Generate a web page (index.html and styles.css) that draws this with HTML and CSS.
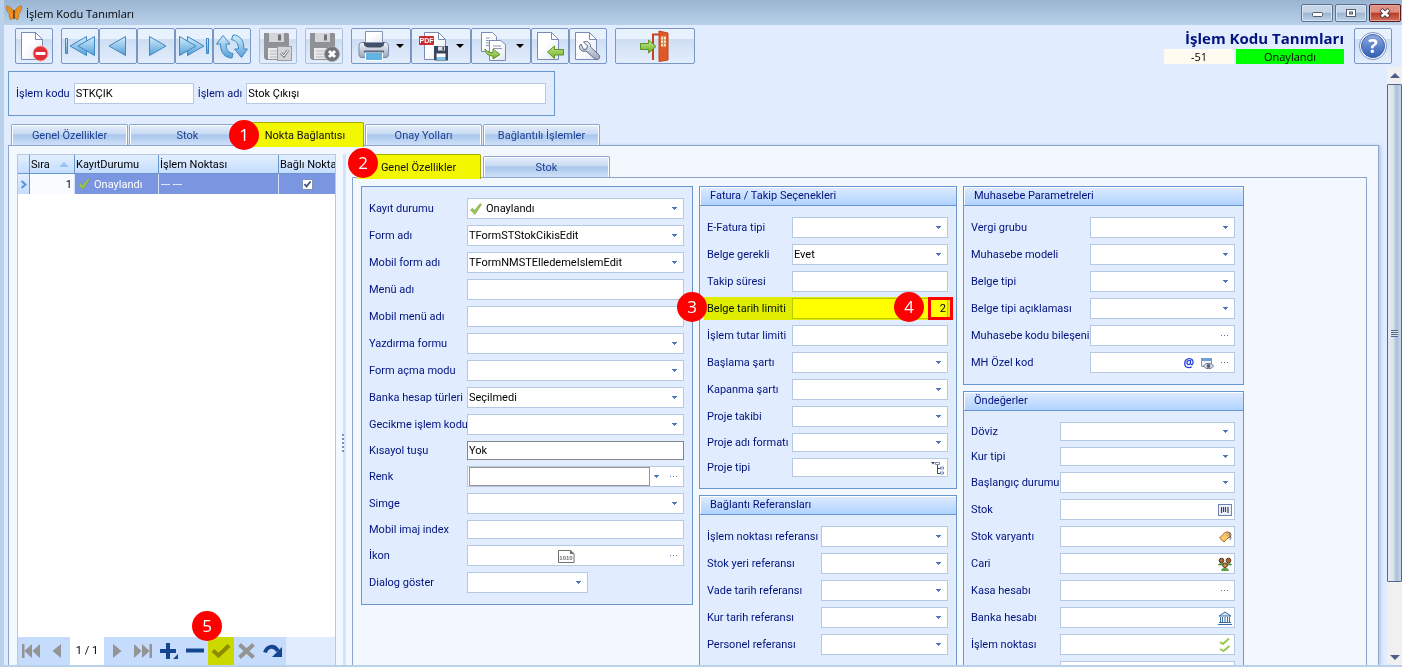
FILE: index.html
```html
<!DOCTYPE html>
<html lang="tr">
<head>
    <meta charset="utf-8" />
    <meta name="viewport" content="width=device-width, initial-scale=1" />
    <title>İşlem Kodu Tanımları</title>
    <link rel="stylesheet" href="styles.css">
</head>
<body>
    <!-- shared icon shapes -->
    <svg class="defs" width="0" height="0" aria-hidden="true">
        <defs>
            <linearGradient id="blue" x1="0" y1="0" x2="0" y2="1">
                <stop offset="0" stop-color="#d3eefb" />
                <stop offset="1" stop-color="#559fd8" />
            </linearGradient>
            <linearGradient id="paper" x1="0" y1="0" x2="1" y2="1">
                <stop offset="0.400" stop-color="#ffffff" />
                <stop offset="1" stop-color="#e3e7f3" />
            </linearGradient>
            <linearGradient id="green" x1="0" y1="0" x2="0" y2="1">
                <stop offset="0" stop-color="#c5e68a" />
                <stop offset="1" stop-color="#6eb02c" />
            </linearGradient>
            <linearGradient id="steel" x1="0" y1="0" x2="0" y2="1">
                <stop offset="0" stop-color="#f4f6fa" />
                <stop offset="1" stop-color="#98a4b8" />
            </linearGradient>
            <linearGradient id="help" x1="0" y1="0" x2="0" y2="1">
                <stop offset="0" stop-color="#8fa9e0" />
                <stop offset="1" stop-color="#2f5fb5" />
            </linearGradient>
            <symbol id="page" viewBox="0 0 32 32">
                <path d="M6.500 2.500h14l7 7v20h-21z" fill="url(#paper)" stroke="#7a89b8" />
                <path d="M20.500 2.500v7h7z" fill="#fff" stroke="#7a89b8" />
            </symbol>
            <symbol id="floppy" viewBox="0 0 32 32">
                <path d="M2 3h24l1 1v26H4l-2-2z" fill="#8f9196" />
                <path d="M7 3h15v9H7z" fill="#d4d5d8" />
                <path d="M16 4.500h3v6h-3z" fill="#6f7178" />
                <path d="M6 18h17v11H6z" fill="#e9eaec" />
                <path d="M8 21h13M8 24h13M8 27h13" stroke="#b5b7bb" />
            </symbol>
            <symbol id="tick" viewBox="0 0 12 12">
                <path d="M0.500 7 2.500 5.200 4.500 7.600 10.200.600 11.500 1.600 5 11.400z" fill="#97c94c" stroke="#7f9c55" stroke-width=".6" />
            </symbol>
        </defs>
    </svg>

    <header class="titlebar">
        <svg class="logo" width="16" height="16" viewBox="0 0 16 16">
            <path d="M8 7C6 3 3 .500.500 1 0 4 1.500 7.500 3.500 9c-1 1.500 0 4.500 1.500 6C7 13.500 8 11 8 9c0 2 1 4.500 3 6 1.500-1.500 2.500-4.500 1.500-6 2-1.500 3.500-5 3-8C13 .500 10 3 8 7z" fill="#ef9420" stroke="#a85f10" stroke-width=".6" />
            <path d="M8 5v9" stroke="#4a2408" stroke-width="1.200" />
            <path d="M3 3.500 7 8M13 3.500 9 8" stroke="#c26c10" stroke-width=".6" />
        </svg>
        <span class="caption">İşlem Kodu Tanımları</span>
        <div class="window-buttons">
            <button class="win" aria-label="Simge durumuna küçült"><svg width="12" height="12"><rect x="1.500" y="5.500" width="10" height="4" rx="1" fill="#fff" stroke="#555d6b" /></svg></button>
            <button class="win" aria-label="Ekranı kapla"><svg width="12" height="12"><rect x="1.500" y="2.500" width="9" height="7" fill="#fff" stroke="#555d6b" /><rect x="4.500" y="5" width="3" height="2" fill="#9db7d3" stroke="#555d6b" /></svg></button>
            <button class="win close" aria-label="Kapat"><svg width="12" height="12"><path d="M2 2.500 10 10M10 2.500 2 10" stroke="#4b3036" stroke-width="4.400" /><path d="M2.500 3 9.500 9.500M9.500 3 2.500 9.500" stroke="#fff" stroke-width="2.600" /></svg></button>
        </div>
    </header>

    <div class="toolbar">
        <div class="tool-group">
            <button class="tool" aria-label="Sil"><svg width="32" height="32"><use href="#page" x="-3" /><circle cx="22.500" cy="23.500" r="7.500" fill="#e02f36" stroke="#f7a5a5" /><rect x="17.500" y="22" width="10" height="3" rx="1" fill="#fff" /></svg></button>
        </div>
        <div class="tool-group">
            <button class="tool" aria-label="İlk"><svg width="32" height="32" fill="url(#blue)" stroke="#3f87c2"><path d="M1.500 8.500h2v15h-2z" /><path d="M22.500 6.500v19L6 16z" /><path d="M30.500 6.500v19L14 16z" /></svg></button>
            <button class="tool" aria-label="Önceki"><svg width="32" height="32" fill="url(#blue)" stroke="#3f87c2"><path d="M23.500 6.500v19L7 16z" /></svg></button>
            <button class="tool" aria-label="Sonraki"><svg width="32" height="32" fill="url(#blue)" stroke="#3f87c2"><path d="M9.500 6.500v19L26 16z" /></svg></button>
            <button class="tool" aria-label="Son"><svg width="32" height="32" fill="url(#blue)" stroke="#3f87c2"><path d="M28.500 8.500h2v15h-2z" /><path d="M9.500 6.500v19L26 16z" /><path d="M1.500 6.500v19L18 16z" /></svg></button>
            <button class="tool" aria-label="Yenile"><svg width="32" height="32" fill="url(#blue)" stroke="#3f87c2"><path d="M7 5.500 14 14h-4c0 6 3 9 7 9.500l-1 4.500C9 28 4.500 23 4.500 14H.500z" /><path d="M25.500 27.500 18.500 19h4c0-6-3-8.500-7-9.500L17 5c7 0 11 5.500 11 14h3.500z" /></svg></button>
        </div>
        <div class="tool-group">
            <button class="tool pale" aria-label="Kaydet"><svg width="32" height="32"><use href="#floppy" /><rect x="15.500" y="16.500" width="14" height="14" fill="#d2d4d9" stroke="#9b9da2" /><path d="m19 23 3 3 4-6" fill="none" stroke="#85878c" stroke-width="3" /><path d="m19 23 3 3 4-6" fill="none" stroke="#fff" /></svg></button>
        </div>
        <div class="tool-group">
            <button class="tool pale" aria-label="Vazgeç"><svg width="32" height="32"><use href="#floppy" /><circle cx="24" cy="24" r="7.500" fill="#6f7278" stroke="#a3a5aa" /><path d="m21 21 6 6M27 21l-6 6" stroke="#fff" stroke-width="3" /></svg></button>
        </div>
        <div class="tool-group">
            <button class="tool drop" aria-label="Yazdır"><svg width="32" height="32"><path d="M3.500 12.500c-2 0-2.500 2-2.500 4v7c0 3 1 4 3 4h24c2 0 2.500-2 2.500-4v-7c0-2-1-4-3-4z" fill="url(#steel)" stroke="#7587a8" /><path d="M5.500 12h21l-1 4-3 1.500h-13L6.500 16z" fill="#43506b" /><path d="M7.500 1.500h17v11h-17z" fill="url(#paper)" stroke="#8794b4" /><path d="M7.500 22.500h17v8h-17z" fill="#62b2e4" stroke="#fff" /><path d="M6 21.500h20" stroke="#5b6985" stroke-width="2" /></svg><span class="caret"></span></button>
            <button class="tool drop" aria-label="PDF kaydet"><svg width="32" height="32"><use href="#page" /><rect x="1" y="6" width="15" height="9" rx="1" fill="#c92b2e" /><text x="8.500" y="13" class="pdf">PDF</text><path d="M16 16h14v14.500H17l-1-1z" fill="#39445d" /><path d="M20 16.500h7v4h-7z" fill="#dfe5ee" /><path d="M24.500 17h1.500v3h-1.500z" fill="#39445d" /><path d="M18.500 23.500h9v3.500h-9z" fill="#fff" /><path d="M18.500 27h9v3h-9z" fill="#7cc5ec" /></svg><span class="caret"></span></button>
            <button class="tool drop" aria-label="Kopyala"><svg width="32" height="32"><path d="M3.500 2.500h11l4 4v15h-15z" fill="url(#paper)" stroke="#7a89b8" /><path d="M8 8h4M8 10.500h5M8 13h5M8 15.500h5" stroke="#8a97b8" /><path d="M11.500 10.500h11l5 4v16h-16z" fill="url(#paper)" stroke="#7a89b8" /><path d="M15 16h8M15 18.500h9" stroke="#8a97b8" /><path d="M7 19c2 3 5 4 8 3.500V19l7 5.500-7 4.500v-3c-5 0-8-3-8-7z" fill="url(#green)" stroke="#5c9422" /></svg><span class="caret"></span></button>
            <button class="tool" aria-label="İçeri al"><svg width="32" height="32"><use href="#page" x="-3" /><path d="m13.500 22 7-6v3.500h9v5.500h-9v3.500z" fill="url(#green)" stroke="#5c9422" /></svg></button>
            <button class="tool" aria-label="Ayarlar"><svg width="32" height="32"><use href="#page" x="-3" /><path d="M9 14c-1.500 1-2 3-1 5s3.500 3 6 2l9 8c3 2 6-1 4-4l-8.500-8c.500-4-3-6.500-7-5l4 4-1 3-3 .500z" fill="url(#steel)" stroke="#5c6b86" /></svg></button>
        </div>
        <div class="tool-group">
            <button class="tool wide" aria-label="Çıkış"><svg width="32" height="32"><path d="M14 30V4.500H21" fill="none" stroke="#c9441e" stroke-width="2" /><path d="m20 1 9 2v27l-9 1.500z" fill="#df5828" stroke="#c9441e" /><path d="M22 6.500h5v10h-5z" fill="#f2e4c3" /><path d="M24.500 6.500v10M22 10h5M22 13.500h5" stroke="#b8905c" /><path d="M1.500 13.500h8V10l7.500 6.500L9.500 23v-3.500h-8z" fill="url(#green)" stroke="#5c9422" /></svg></button>
        </div>
        <div class="record">
            <h1>İşlem Kodu Tanımları</h1>
            <div class="record-state">
                <span class="record-id">-51</span>
                <span class="record-status">Onaylandı</span>
            </div>
        </div>
        <button class="tool help" aria-label="Yardım"><svg width="32" height="32"><circle cx="16" cy="16" r="13.500" fill="#fff" stroke="#7c93c3" /><circle cx="16" cy="16" r="11.500" fill="url(#help)" stroke="#3a62ad" /><text x="16" y="23" class="question">?</text></svg></button>
    </div>

    <div class="main">
        <div class="content">
            <div class="code-panel">
                <label for="kod">İşlem kodu</label>
                <input class="field code" id="kod" type="text" value="STKÇIK">
                <label for="ad">İşlem adı</label>
                <input class="field name" id="ad" type="text" value="Stok Çıkışı">
            </div>

            <div class="tabs">
                <button class="tab">Genel Özellikler</button>
                <button class="tab">Stok</button>
                <button class="tab active">Nokta Bağlantısı<span class="badge badge-tab">1</span></button>
                <button class="tab">Onay Yolları</button>
                <button class="tab">Bağlantılı İşlemler</button>
            </div>

            <div class="tab-page">
                <div class="list">
                    <table class="grid">
                        <colgroup><col class="c-mark"><col class="c-no"><col class="c-state"><col class="c-point"><col></colgroup>
                        <thead>
                            <tr><th></th><th>Sıra<span class="sort"></span></th><th>KayıtDurumu</th><th>İşlem Noktası</th><th>Bağlı Nokta</th></tr>
                        </thead>
                        <tbody>
                            <tr>
                                <td class="mark"><svg width="7" height="9"><path d="m1.500 1 4 3.500-4 3.500" fill="none" stroke="#5b93dd" stroke-width="2" /></svg></td>
                                <td class="no">1</td>
                                <td><span class="with-icon"><svg width="12" height="12"><use href="#tick" /></svg>Onaylandı</span></td>
                                <td>--- ---</td>
                                <td class="check"><input type="checkbox" checked aria-label="Bağlı Nokta"></td>
                            </tr>
                        </tbody>
                    </table>
                    <div class="navigator">
                        <button aria-label="İlk kayıt"><svg width="20" height="16" fill="#949494"><path d="M1 1h2.500v14H1zM11 1v14L3.500 8zM19 1v14l-7.500-7z" /></svg></button>
                        <button aria-label="Önceki kayıt"><svg width="20" height="16" fill="#949494"><path d="M14 1v14L5.500 8z" /></svg></button>
                        <span class="position">1 / 1</span>
                        <button aria-label="Sonraki kayıt"><svg width="20" height="16" fill="#949494"><path d="M6 1v14l8.500-7z" /></svg></button>
                        <button aria-label="Son kayıt"><svg width="20" height="16" fill="#949494"><path d="M16.500 1H19v14h-2.500zM1 1v14l7.500-7zM9 1v14l7.500-7z" /></svg></button>
                        <button aria-label="Ekle"><svg width="20" height="18" fill="#14468f"><path d="M7 1h4v6h6v4h-6v6H7v-6H1V7h6zM19 12v5h-5z" /></svg></button>
                        <button aria-label="Çıkar"><svg width="20" height="16" fill="#14468f"><path d="M1 5.500h18v4H1z" /></svg></button>
                        <button class="post" aria-label="Onayla"><svg width="20" height="16"><path d="m2 7.500 5.500 5L18 2.500" fill="none" stroke="#8e8b00" stroke-width="4" /></svg><span class="badge badge-post">5</span></button>
                        <button aria-label="İptal"><svg width="20" height="16"><path d="m2.500 1.500 14 13M16.500 1.500l-14 13" stroke="#949494" stroke-width="4" /></svg></button>
                        <button aria-label="Geri al"><svg width="20" height="16"><path d="M2 9.500C4 3 11 1.500 15 8" fill="none" stroke="#14468f" stroke-width="4" /><path d="M19 4v10H9z" fill="#14468f" /></svg></button>
                    </div>
                </div>

                <div class="splitter"><span class="grip"></span></div>

                <div class="detail">
                    <div class="tabs inner">
                        <button class="tab active">Genel Özellikler<span class="badge badge-inner">2</span></button>
                        <button class="tab">Stok</button>
                    </div>
                    <div class="detail-page">
                        <div class="column">
                            <section class="group general">
                                <div class="rows">
                                    <div class="row"><label for="g1">Kayıt durumu</label><div class="picture-select"><svg width="12" height="12"><use href="#tick" /></svg><select class="field" id="g1"><option>Onaylandı</option></select></div></div>
                                    <div class="row"><label for="g2">Form adı</label><select class="field" id="g2"><option>TFormSTStokCikisEdit</option></select></div>
                                    <div class="row"><label for="g3">Mobil form adı</label><select class="field" id="g3"><option>TFormNMSTElledemeIslemEdit</option></select></div>
                                    <div class="row"><label for="g4">Menü adı</label><input class="field" id="g4" type="text"></div>
                                    <div class="row"><label for="g5">Mobil menü adı</label><input class="field" id="g5" type="text"></div>
                                    <div class="row"><label for="g6">Yazdırma formu</label><select class="field" id="g6"><option></option></select></div>
                                    <div class="row"><label for="g7">Form açma modu</label><select class="field" id="g7"><option></option></select></div>
                                    <div class="row"><label for="g8">Banka hesap türleri</label><select class="field" id="g8"><option>Seçilmedi</option></select></div>
                                    <div class="row"><label for="g9">Gecikme işlem kodu</label><select class="field" id="g9"><option></option></select></div>
                                    <div class="row short"><label for="g10">Kısayol tuşu</label><input class="field dark" id="g10" type="text" value="Yok"></div>
                                    <div class="row"><label for="g11">Renk</label><div class="field combo color"><select id="g11"><option></option></select><button class="more" aria-label="Renk seç"></button></div></div>
                                    <div class="row"><label for="g12">Simge</label><select class="field" id="g12"><option></option></select></div>
                                    <div class="row short"><label for="g13">Mobil imaj index</label><input class="field" id="g13" type="text"></div>
                                    <div class="row"><label for="g14">İkon</label><div class="field combo icon-field"><svg width="17" height="14"><path d="M.500 1.500h12l3.500 3v9H.500z" fill="#fff" stroke="#6f6f6f" /><path d="M12 1v4h4z" fill="#6f6f6f" /><text x="8" y="11" class="bits">1010</text></svg><button class="more" id="g14"></button></div></div>
                                    <div class="row"><label for="g15">Dialog göster</label><select class="field narrow" id="g15"><option></option></select></div>
                                </div>
                            </section>
                        </div>

                        <div class="column">
                            <section class="group invoice">
                                <h2>Fatura / Takip Seçenekleri</h2>
                                <div class="rows">
                                    <div class="row"><label for="f1">E-Fatura tipi</label><select class="field" id="f1"><option></option></select></div>
                                    <div class="row"><label for="f2">Belge gerekli</label><select class="field" id="f2"><option>Evet</option></select></div>
                                    <div class="row"><label for="f3">Takip süresi</label><input class="field" id="f3" type="text"></div>
                                    <div class="row marked"><label for="f4">Belge tarih limiti</label><input class="field number" id="f4" type="text" value="2"><span class="frame"></span><span class="badge badge-row">3</span><span class="badge badge-value">4</span></div>
                                    <div class="row"><label for="f5">İşlem tutar limiti</label><input class="field" id="f5" type="text"></div>
                                    <div class="row"><label for="f6">Başlama şartı</label><select class="field" id="f6"><option></option></select></div>
                                    <div class="row"><label for="f7">Kapanma şartı</label><select class="field" id="f7"><option></option></select></div>
                                    <div class="row"><label for="f8">Proje takibi</label><select class="field" id="f8"><option></option></select></div>
                                    <div class="row short"><label for="f9">Proje adı formatı</label><select class="field" id="f9"><option></option></select></div>
                                    <div class="row short"><label for="f10">Proje tipi</label><div class="field combo"><input id="f10" type="text"><button class="pick" aria-label="Proje tipi seç"><svg width="14" height="14"><path d="M0 1h4L2 3.500z" fill="#39445d" /><path d="M6.500 4v8.500H9M6.500 7.500H9" fill="none" stroke="#39445d" /><path d="M4.500 1.500h4v2h-4zM9.500 6h3v2h-3zM9.500 11h3v2h-3z" fill="#fff" stroke="#7a89b8" /></svg></button></div></div>
                                </div>
                            </section>
                            <section class="group references">
                                <h2>Bağlantı Referansları</h2>
                                <div class="rows">
                                    <div class="row"><label for="r1">İşlem noktası referansı</label><select class="field" id="r1"><option></option></select></div>
                                    <div class="row"><label for="r2">Stok yeri referansı</label><select class="field" id="r2"><option></option></select></div>
                                    <div class="row"><label for="r3">Vade tarih referansı</label><select class="field" id="r3"><option></option></select></div>
                                    <div class="row"><label for="r4">Kur tarih referansı</label><select class="field" id="r4"><option></option></select></div>
                                    <div class="row"><label for="r5">Personel referansı</label><select class="field" id="r5"><option></option></select></div>
                                </div>
                            </section>
                        </div>

                        <div class="column">
                            <section class="group accounting">
                                <h2>Muhasebe Parametreleri</h2>
                                <div class="rows">
                                    <div class="row"><label for="m1">Vergi grubu</label><select class="field" id="m1"><option></option></select></div>
                                    <div class="row"><label for="m2">Muhasebe modeli</label><select class="field" id="m2"><option></option></select></div>
                                    <div class="row"><label for="m3">Belge tipi</label><select class="field" id="m3"><option></option></select></div>
                                    <div class="row"><label for="m4">Belge tipi açıklaması</label><select class="field" id="m4"><option></option></select></div>
                                    <div class="row"><label for="m5">Muhasebe kodu bileşeni</label><div class="field combo"><input id="m5" type="text"><button class="more" aria-label="Bileşen seç"></button></div></div>
                                    <div class="row"><label for="m6">MH Özel kod</label><div class="field combo"><input id="m6" type="text"><button class="pick at" aria-label="Değişken">@</button><button class="pick" aria-label="Önizle"><svg width="14" height="14"><path d="M1.500 2.500h10v8h-10z" fill="#eef3fb" stroke="#8795b5" /><path d="M1 2h11v3H1z" fill="#6d9fd0" /><path d="M3.500 10c2-3.500 8-3.500 10 0-2 3.500-8 3.500-10 0z" fill="#e8ebf3" stroke="#66718c" /><circle cx="8.500" cy="10" r="2" fill="#55607a" /></svg></button><button class="more" aria-label="Kod seç"></button></div></div>
                                </div>
                            </section>
                            <section class="group defaults">
                                <h2>Öndeğerler</h2>
                                <div class="rows">
                                    <div class="row short"><label for="d1">Döviz</label><select class="field" id="d1"><option></option></select></div>
                                    <div class="row short"><label for="d2">Kur tipi</label><select class="field" id="d2"><option></option></select></div>
                                    <div class="row"><label for="d3">Başlangıç durumu</label><select class="field" id="d3"><option></option></select></div>
                                    <div class="row"><label for="d4">Stok</label><div class="field combo"><input id="d4" type="text"><button class="pick" aria-label="Stok seç"><svg width="14" height="14"><rect x=".500" y="1.500" width="13" height="11" fill="#eef2fb" stroke="#6f80b4" /><path d="M3.500 4v6M5.500 4v5M7.500 4v5M10 4v6" stroke="#39445d" stroke-width="1.200" /></svg></button></div></div>
                                    <div class="row"><label for="d5">Stok varyantı</label><div class="field combo"><input id="d5" type="text"><button class="pick" aria-label="Varyant seç"><svg width="14" height="14"><circle cx="10" cy="5" r="3" fill="none" stroke="#6c6f78" /><path d="M1.500 8 7.500 2l4 .500.500 3.500L6 12z" fill="#f9c66a" stroke="#b4692a" /><circle cx="9.500" cy="4.700" r="1" fill="#fff" stroke="#8d5a2a" stroke-width=".6" /><path d="M12 5.500c1.500 1.500 1 3.500-.500 4.500" fill="none" stroke="#6c6f78" /></svg></button></div></div>
                                    <div class="row"><label for="d6">Cari</label><div class="field combo"><input id="d6" type="text"><button class="pick" aria-label="Cari seç"><svg width="14" height="14"><path d="M.500 8c0-2 6-2 6 0zM7.500 8c0-2 6-2 6 0zM3.500 13.500c0-3 7-3 7 0z" fill="#4fa33a" stroke="#2f7a24" stroke-width=".6" /><circle cx="3.500" cy="3.500" r="2.300" fill="#a8683a" stroke="#5d3216" /><circle cx="10.500" cy="3.500" r="2.300" fill="#a8683a" stroke="#5d3216" /><circle cx="7" cy="8.200" r="2.300" fill="#c98a55" stroke="#5d3216" /></svg></button></div></div>
                                    <div class="row"><label for="d7">Kasa hesabı</label><div class="field combo"><input id="d7" type="text"><button class="more" aria-label="Kasa seç"></button></div></div>
                                    <div class="row"><label for="d8">Banka hesabı</label><div class="field combo"><input id="d8" type="text"><button class="pick" aria-label="Banka seç"><svg width="14" height="14"><path d="M1 5 7 1l6 4z" fill="#d6e6f5" stroke="#3b6ea5" /><path d="M2.500 6v5.500M4.500 6v5.500M7 6v5.500M9.500 6v5.500M11.500 6v5.500" stroke="#3b6ea5" /><path d="M1 11.500h12M0 13.500h14" stroke="#3b6ea5" /></svg></button></div></div>
                                    <div class="row"><label for="d9">İşlem noktası</label><div class="field combo"><input id="d9" type="text"><button class="pick" aria-label="Nokta seç"><svg width="14" height="14" fill="none" stroke="#97c94c" stroke-width="2"><path d="m2 4 3 2 6-5.500M2 11l3.500 2 6-5" /></svg></button></div></div>
                                    <div class="row"><label for="d10"></label><input class="field" id="d10" type="text"></div>
                                </div>
                            </section>
                        </div>
                    </div>
                </div>
            </div>
        </div>

        <div class="scrollbar">
            <span class="arrow up"></span>
            <div class="track"><div class="thumb"><span class="ridges"></span></div></div>
            <span class="arrow down"></span>
        </div>
    </div>
</body>
</html>
```
FILE: styles.css
```css
* {
    box-sizing: border-box;
}

body {
    display: flex;
    flex-direction: column;
    height: 100vh;
    margin: 0;
    overflow: hidden;
    background-color: #e1edff;
    border-left: 4px solid #b9d1ea;
    border-bottom: 2px solid #b9d1ea;
    font-family: Roboto, "Liberation Sans", sans-serif;
    font-size: 11px;
    color: #000;
}

button,
input,
select {
    margin: 0;
    padding: 0;
    border: 0;
    background: none;
    font: inherit;
    color: inherit;
    outline: none;
}

svg {
    display: block;
    flex: none;
}

.defs {
    position: absolute;
}

/* Title bar */
.titlebar {
    display: flex;
    align-items: center;
    flex: none;
    height: 25px;
    margin-left: -4px;
    padding-left: 6px;
    background: linear-gradient(#99b4d1, #b9d1ea);
    font-family: "Open Sans", "Noto Sans", sans-serif;
}

.caption {
    flex: 1;
    margin-left: 4px;
    padding-top: 2px;
}

.window-buttons {
    display: flex;
    gap: 2px;
    padding-right: 1px;
}

.win {
    display: flex;
    align-items: center;
    justify-content: center;
    width: 32px;
    height: 18px;
    border: 1px solid #5d7490;
    border-radius: 2px;
    box-shadow: inset 0 0 0 1px #d6e4f3;
    background: linear-gradient(#c6d6e8 45%, #9cb5d0 50%, #bcd2e8);
}

.win.close {
    border-color: #5b1a20;
    box-shadow: inset 0 0 0 1px #e3a59b;
    background: linear-gradient(#dc9184 45%, #b93a26 50%, #d0705a);
}

/* Toolbar */
.toolbar {
    display: flex;
    flex: none;
    gap: 8px;
    height: 42px;
    padding: 3px 10px 3px 11px;
}

.tool-group {
    display: flex;
}

.tool {
    display: flex;
    align-items: center;
    justify-content: center;
    width: 38px;
    height: 36px;
    border: 1px solid #7a96c2;
    border-radius: 2px;
    background: linear-gradient(#e8f1fe 28%, #cdddf2 30%, #e3eefd);
}

.tool.pale {
    border-color: #aebfd9;
}

.tool.drop {
    width: 60px;
    gap: 6px;
}

.tool.wide {
    width: 80px;
}

.caret {
    border: 4px solid transparent;
    border-top-color: #000;
    border-bottom: 0;
}

.pdf {
    fill: #fff;
    font: bold 7px "Liberation Sans", sans-serif;
    text-anchor: middle;
}

.question {
    fill: #fff;
    font: bold 20px "Open Sans", sans-serif;
    text-anchor: middle;
}

.record {
    margin-left: auto;
    font-family: "Open Sans", "Noto Sans", sans-serif;
    text-align: right;
}

.record h1 {
    margin: 0;
    color: #00127d;
    font-size: 15px;
    line-height: 21px;
}

.record-state {
    display: flex;
    gap: 2px;
    line-height: 15px;
    text-align: center;
}

.record-id {
    width: 70px;
    background-color: #fffbf0;
}

.record-status {
    flex: 1;
    min-width: 108px;
    background-color: #0f0;
}

.help {
    margin-left: 2px;
}

/* Work area */
.main {
    display: flex;
    flex: 1;
    min-height: 0;
}

.content {
    display: flex;
    flex-direction: column;
    flex: 1;
    min-width: 0;
    padding: 4px 8px 0 4px;
}

.code-panel {
    display: flex;
    align-items: center;
    align-self: flex-start;
    flex: none;
    gap: 4px;
    height: 45px;
    padding: 0 8px 0 7px;
    border: 1px solid #6a96cf;
    color: #00127d;
}

.field {
    display: block;
    width: 100%;
    min-width: 0;
    height: 21px;
    padding: 0 1px;
    border: 1px solid #b5c9e5;
    background-color: #fff;
    color: #000;
}

.field.code {
    width: 120px;
}

.field.name {
    width: 300px;
}

/* Tabs */
.tabs {
    display: flex;
    align-items: flex-end;
    flex: none;
    gap: 1px;
    height: 23px;
    margin-top: 6px;
    padding-left: 3px;
}

.tab {
    position: relative;
    width: 117px;
    height: 21px;
    border: 1px solid #8ba5d0;
    border-bottom: 0;
    border-radius: 2px 2px 0 0;
    box-shadow: inset 1px 1px #fff, inset -1px 0 #fff;
    background: linear-gradient(#e2ecfa 5%, #c8daf3 45%, #a9c6ee 50%, #cfe0f7);
    color: #1c3f91;
}

.tab.active {
    z-index: 1;
    height: 25px;
    margin-bottom: -2px;
    border-color: #a9ac00;
    border-left: 0;
    box-shadow: none;
    background: #f3f700;
    color: #111;
}

.tabs.inner {
    gap: 2px;
    margin-top: 0;
    padding-left: 5px;
}

.tabs.inner .tab {
    width: 127px;
}

.tabs.inner .tab.active {
    width: 124px;
}

.tab-page {
    display: flex;
    flex: 1;
    min-height: 0;
    padding: 8px 11px 0 8px;
    border: 1px solid #8ba5d0;
    border-bottom: 0;
    box-shadow: 2px 0 3px #b6cbea;
    background-color: #f3f8ff;
}

/* Record list */
.list {
    display: flex;
    flex-direction: column;
    flex: none;
    width: 319px;
    border: 1px solid #b5c9e5;
    border-bottom: 0;
    background-color: #fff;
}

.grid {
    width: 100%;
    border-collapse: separate;
    border-spacing: 0;
    table-layout: fixed;
}

.c-mark { width: 12px; }
.c-no { width: 45px; }
.c-state { width: 84px; }
.c-point { width: 120px; }

.grid th,
.grid td {
    overflow: hidden;
    padding: 0 2px;
    text-align: left;
    font-weight: normal;
    white-space: nowrap;
}

.grid th {
    height: 19px;
    padding: 0 0 0 1px;
    border-right: 1px solid #6a96cf;
    border-bottom: 1px solid #6a96cf;
    background: linear-gradient(#e3efff, #c4ddff);
}

.grid td {
    height: 20px;
    border-right: 1px solid #d5e2f7;
    background-color: #7b96e0;
    color: #fff;
}

.grid th:last-child,
.grid td:last-child {
    border-right: 0;
}

.grid .mark {
    border-right-color: #6a96cf;
    background: linear-gradient(#e3efff, #c4ddff);
}

.grid .no {
    background-color: #f8fbff;
    color: #000;
    text-align: right;
}

.grid .check {
    text-align: center;
}

.check input {
    display: inline-block;
    width: 11px;
    height: 11px;
    appearance: none;
    border: 1px solid #8294b5;
    background: #fff url("data:image/svg+xml,%3Csvg xmlns='http://www.w3.org/2000/svg' width='9' height='9'%3E%3Cpath d='M1.500 4 3.500 6.500 7.500 1.500' fill='none' stroke='%234a5a80' stroke-width='2'/%3E%3C/svg%3E") center no-repeat;
    vertical-align: middle;
}

.sort {
    display: inline-block;
    margin-left: 9px;
    border: 5px solid transparent;
    border-top: 0;
    border-bottom-color: #9cc3f5;
    vertical-align: middle;
}

.with-icon {
    display: flex;
    align-items: center;
    gap: 4px;
    padding-left: 1px;
}

.navigator {
    display: flex;
    height: 28px;
    margin-top: auto;
    background: linear-gradient(to right, #c6dcfd 268px, #e1edff 268px);
}

.navigator button {
    position: relative;
    display: flex;
    align-items: center;
    justify-content: center;
    width: 26px;
}

.navigator .post {
    background-color: #cbd900;
}

.position {
    width: 34px;
    background-color: #fff;
    line-height: 28px;
    text-align: center;
}

.splitter {
    display: flex;
    align-items: center;
    flex: none;
    width: 16px;
    padding-left: 6px;
    background: linear-gradient(to right, transparent 7px, #d3e4fa 7px, #d3e4fa 10px, transparent 10px);
}

.grip {
    width: 2px;
    height: 18px;
    margin-top: 66px;
    background: repeating-linear-gradient(#6f93c8 0 2px, #f3f8ff 2px 4px);
}

/* Detail form */
.detail {
    display: flex;
    flex-direction: column;
    flex: 1;
    min-width: 0;
}

.detail-page {
    display: grid;
    grid-template-columns: 332px 258px 281px;
    align-items: start;
    gap: 6px;
    flex: 1;
    min-height: 0;
    overflow: hidden;
    padding: 8px 8px 0;
    border: 1px solid #8ba5d0;
    border-bottom: 0;
}

.column {
    display: grid;
    gap: 6px;
}

.group {
    border: 1px solid #6a96cf;
    background-color: #e1edff;
    color: #00127d;
}

.group h2 {
    margin: 0;
    padding-left: 10px;
    border-bottom: 1px solid #6a96cf;
    box-shadow: inset 1px 1px #fff;
    background: linear-gradient(#dfecff, #b0d2ff);
    font-size: 11px;
    font-weight: normal;
    line-height: 18px;
}

.rows {
    display: grid;
    gap: 6px;
    padding: 11px 8px 11px 7px;
}

.row {
    position: relative;
    display: grid;
    grid-template-columns: 98px 1fr;
    align-items: center;
    white-space: nowrap;
}

.invoice .row { grid-template-columns: 85px 1fr; }
.references .row { grid-template-columns: 114px 1fr; }
.accounting .row { grid-template-columns: 119px 1fr; }
.defaults .row { grid-template-columns: 89px 1fr; }

.short .field {
    height: 19px;
}

select {
    appearance: none;
}

select.field,
.combo select {
    background: #fff url("data:image/svg+xml,%3Csvg xmlns='http://www.w3.org/2000/svg' width='5' height='3'%3E%3Cpath d='M0 0h5v1H4v1H3v1H2V2H1V1H0z' fill='%234d78b5'/%3E%3C/svg%3E") right 6px center no-repeat;
}

.field.narrow {
    width: 121px;
}

.field.dark {
    border-color: #858585;
}

.field.number {
    text-align: right;
}

.picture-select {
    position: relative;
}

.picture-select svg {
    position: absolute;
    left: 3px;
    top: 5px;
}

.picture-select .field {
    padding-left: 18px;
}

.combo {
    display: flex;
    align-items: center;
    padding: 0;
}

.combo input,
.combo select {
    flex: 1;
    min-width: 0;
    height: 100%;
}

/* Colour swatch inside the combo */
.color {
    padding-left: 1px;
}

.color::before {
    content: "";
    width: 179px;
    height: 17px;
    border: 1px solid #9a9494;
}

.icon-field svg {
    margin: 0 auto;
}

.more {
    width: 18px;
    height: 100%;
    background: url("data:image/svg+xml,%3Csvg xmlns='http://www.w3.org/2000/svg' width='8' height='1'%3E%3Cpath d='M0 0h1v1H0zM3 0h1v1H3zM6 0h1v1H6z' fill='%234d78b5'/%3E%3C/svg%3E") center no-repeat;
}

.pick {
    display: flex;
    align-items: center;
    justify-content: center;
    width: 18px;
    height: 100%;
}

.at {
    color: #1f3fd6;
    font: bold 12px "Open Sans", sans-serif;
}

.bits {
    fill: #6f6f6f;
    font: bold 6px "Liberation Sans", sans-serif;
    text-anchor: middle;
}

/* Callouts */
.marked::after {
    content: "";
    position: absolute;
    inset: -1px -4px -1px -3px;
    background-color: #ff0;
    mix-blend-mode: multiply;
}

.frame {
    position: absolute;
    z-index: 1;
    right: -5px;
    top: -1px;
    width: 25px;
    height: 23px;
    border: 3px solid #f00;
}

.badge {
    position: absolute;
    z-index: 2;
    width: 30px;
    height: 30px;
    border-radius: 50%;
    background-color: #f00;
    color: #fff;
    font: 17px/30px "Open Sans", "Noto Sans", sans-serif;
    text-align: center;
}

.badge-tab {
    left: -18px;
    top: -3px;
}

.badge-inner {
    left: -9px;
    top: -7px;
}

.badge-row {
    left: -30px;
    top: -6px;
}

.badge-value {
    right: 24px;
    top: -6px;
}

.badge-post {
    left: -16px;
    top: -26px;
}

/* Scrollbar */
.scrollbar {
    display: flex;
    flex-direction: column;
    flex: none;
    width: 15px;
    background-color: #f0f0f0;
}

.arrow {
    align-self: center;
    border: 5px solid transparent;
}

.arrow.up {
    margin: 6px 0;
    border-top: 0;
    border-bottom-color: #4d5b86;
}

.arrow.down {
    margin: 5px 0;
    border-bottom: 0;
    border-top-color: #4d5b86;
}

.track {
    flex: 1;
}

.thumb {
    display: flex;
    align-items: center;
    justify-content: center;
    height: 88%;
    border: 1px solid #56658f;
    border-radius: 1px;
    background: linear-gradient(to right, #e6ebf2, #dbe3ea 40%, #acbfd8 65%, #c9d6e8);
}

.ridges {
    width: 7px;
    height: 7px;
    background: repeating-linear-gradient(#56658f 0 1px, #dbe3ea 1px 2px);
}
```
